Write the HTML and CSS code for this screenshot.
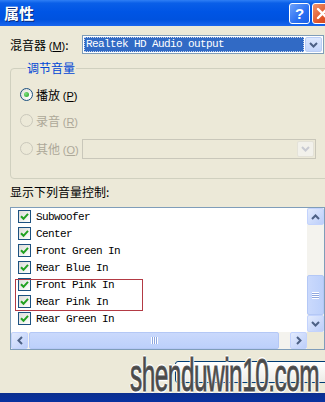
FILE: index.html
```html
<!DOCTYPE html>
<html>
<head>
<meta charset="utf-8">
<link rel="stylesheet" href="styles.css">
</head>
<body>
<div class="window">
  <div class="titlebar">
    <span class="title">属性</span>
    <div class="tb-buttons">
      <span class="tb-btn help">?</span>
      <span class="tb-btn close">
        <svg width="13" height="13" viewBox="0 0 13 13"><path d="M2 2 L11 11 M11 2 L2 11" stroke="#fff" stroke-width="2.4" stroke-linecap="round"/></svg>
      </span>
    </div>
  </div>
  <div class="client">
    <div class="mixer-row">
      <span class="label">混音器 <span class="acc">(<u>M</u>)</span>:</span>
      <div class="combo">
        <div class="combo-sel"><span>Realtek HD Audio output</span></div>
        <div class="combo-btn"><svg width="9" height="6" viewBox="0 0 9 6"><path d="M1 1 L4.5 4.5 L8 1" stroke="#4D6185" stroke-width="2" fill="none"/></svg></div>
      </div>
    </div>

    <fieldset class="group">
      <legend>调节音量</legend>
      <div class="radio-row r1">
        <span class="radio on"><span class="dot"></span></span>
        <span class="rlabel">播放 <span class="acc">(<u>P</u>)</span></span>
      </div>
      <div class="radio-row r2 disabled">
        <span class="radio"></span>
        <span class="rlabel">录音 <span class="acc">(<u>R</u>)</span></span>
      </div>
      <div class="radio-row r3 disabled">
        <span class="radio"></span>
        <span class="rlabel">其他 <span class="acc">(<u>O</u>)</span></span>
        <div class="combo dis">
          <div class="combo-sel"></div>
          <div class="combo-btn"><svg width="9" height="6" viewBox="0 0 9 6"><path d="M1 1 L4.5 4.5 L8 1" stroke="#C9CBD2" stroke-width="2" fill="none"/></svg></div>
        </div>
      </div>
    </fieldset>

    <div class="list-label">显示下列音量控制:</div>

    <div class="listbox">
      <div class="items">
        <div class="item"><span class="chk"><svg width="9" height="9" viewBox="0 0 9 9"><path d="M1 4.2 L3.5 6.8 L8 1.8" stroke="#21A121" stroke-width="2" fill="none"/></svg></span>Subwoofer</div>
        <div class="item"><span class="chk"><svg width="9" height="9" viewBox="0 0 9 9"><path d="M1 4.2 L3.5 6.8 L8 1.8" stroke="#21A121" stroke-width="2" fill="none"/></svg></span>Center</div>
        <div class="item"><span class="chk"><svg width="9" height="9" viewBox="0 0 9 9"><path d="M1 4.2 L3.5 6.8 L8 1.8" stroke="#21A121" stroke-width="2" fill="none"/></svg></span>Front Green In</div>
        <div class="item"><span class="chk"><svg width="9" height="9" viewBox="0 0 9 9"><path d="M1 4.2 L3.5 6.8 L8 1.8" stroke="#21A121" stroke-width="2" fill="none"/></svg></span>Rear Blue In</div>
        <div class="item"><span class="chk"><svg width="9" height="9" viewBox="0 0 9 9"><path d="M1 4.2 L3.5 6.8 L8 1.8" stroke="#21A121" stroke-width="2" fill="none"/></svg></span>Front Pink In</div>
        <div class="item"><span class="chk"><svg width="9" height="9" viewBox="0 0 9 9"><path d="M1 4.2 L3.5 6.8 L8 1.8" stroke="#21A121" stroke-width="2" fill="none"/></svg></span>Rear Pink In</div>
        <div class="item"><span class="chk"><svg width="9" height="9" viewBox="0 0 9 9"><path d="M1 4.2 L3.5 6.8 L8 1.8" stroke="#21A121" stroke-width="2" fill="none"/></svg></span>Rear Green In</div>
        <div class="highlight"></div>
      </div>
      <div class="vscroll">
        <div class="sbtn"><svg width="9" height="6" viewBox="0 0 9 6"><path d="M1 5 L4.5 1.5 L8 5" stroke="#4D6185" stroke-width="2" fill="none"/></svg></div>
        <div class="vtrack"><div class="vthumb"><span class="grip-h"></span></div></div>
        <div class="sbtn"><svg width="9" height="6" viewBox="0 0 9 6"><path d="M1 1 L4.5 4.5 L8 1" stroke="#4D6185" stroke-width="2" fill="none"/></svg></div>
      </div>
      <div class="hscroll">
        <div class="sbtn"><svg width="6" height="9" viewBox="0 0 6 9"><path d="M5 1 L1.5 4.5 L5 8" stroke="#4D6185" stroke-width="2" fill="none"/></svg></div>
        <div class="htrack"><div class="hthumb"><span class="grip-v"></span></div></div>
        <div class="sbtn"><svg width="6" height="9" viewBox="0 0 6 9"><path d="M1 1 L4.5 4.5 L1 8" stroke="#4D6185" stroke-width="2" fill="none"/></svg></div>
      </div>
      <div class="corner"></div>
    </div>

    <div class="button-row">
      <div class="okbtn"></div>
    </div>
  </div>
  <div class="bottom-bar"></div>
  <div class="watermark">shenduwin10.com</div>
</div>
</body>
</html>
```
FILE: styles.css
```css
* { box-sizing: border-box; }
html, body { margin: 0; padding: 0; }
body {
  width: 325px;
  height: 402px;
  overflow: hidden;
  background: #ECE9D8;
  font-family: "Noto Sans CJK SC", "Liberation Sans", sans-serif;
  font-size: 12px;
  color: #000;
}
.window {
  position: relative;
  width: 345px;
  height: 402px;
  display: flex;
  flex-direction: column;
  background: #ECE9D8;
  overflow: hidden;
}
.titlebar {
  height: 26px;
  flex: none;
  display: flex;
  align-items: center;
  justify-content: space-between;
  padding-left: 4px;
  background: linear-gradient(#2f7ff5 0%, #0a5fe8 12%, #0055e5 45%, #0052df 75%, #1a66ee 100%);
}
.title {
  color: #fff;
  font-weight: bold;
  font-size: 15px;
  text-shadow: 1px 1px 0 #0a2a7a;
  line-height: 16px;
}
.tb-buttons {
  display: flex;
  gap: 2px;
  padding-right: 12px;
  margin-top: 1px;
}
.tb-btn {
  width: 21px;
  height: 21px;
  border: 1px solid #fff;
  border-radius: 3px;
  display: flex;
  align-items: center;
  justify-content: center;
  color: #fff;
  font-family: "Liberation Sans", sans-serif;
  font-weight: bold;
  font-size: 15px;
}
.help { background: linear-gradient(135deg, #6ea2fb, #2a6ff2 60%, #1a5fe6); }
.close { background: linear-gradient(135deg, #f0956c, #e0542a 60%, #cc4418); }

.client {
  flex: 1;
  padding: 9px 0 0 10px;
  display: flex;
  flex-direction: column;
}
.acc {
  font-family: "Liberation Sans", sans-serif;
  font-size: 11px;
}
.mixer-row {
  display: flex;
  align-items: center;
  height: 19px;
}
.mixer-row .label { width: 72px; }
.combo {
  display: flex;
  width: 242px;
  height: 19px;
  border: 1px solid #7F9DB9;
  background: #fff;
  padding: 1px;
  gap: 1px;
}
.combo-sel {
  flex: 1;
  background: #316AC5;
  border: 1px dotted #c8d4ea;
  color: #fff;
  font-family: "Liberation Mono", monospace;
  font-size: 11px;
  letter-spacing: -0.6px;
  line-height: 13px;
  padding-left: 1px;
}
.combo-btn {
  width: 17px;
  flex: none;
  border-radius: 2px;
  border: 1px solid #B9CDF5;
  background: linear-gradient(#dde8fd, #c4d6fb);
  display: flex;
  align-items: center;
  justify-content: center;
}
.combo.dis {
  width: 234px;
  margin-left: 3px;
  height: 20px;
  border-color: #C9C7BA;
  background: #ECE9D8;
}
.combo.dis .combo-sel { background: transparent; border: none; }
.combo.dis .combo-btn { border-color: #E4E2D8; background: #F2F1EB; }

.group {
  margin: 6px 0 0 0;
  width: 330px;
  border: 1px solid #D0D0BF;
  border-radius: 4px;
  padding: 9px 0 20px 9px;
}
.group legend {
  color: #0046D5;
  padding: 0 1px;
  margin-left: 6px;
  line-height: 16px;
}
.radio-row {
  display: flex;
  align-items: center;
  height: 19px;
}
.r2 { margin-top: 7px; }
.r3 { margin-top: 9px; }
.radio {
  width: 13px;
  height: 13px;
  border-radius: 50%;
  border: 1px solid #1C5180;
  background: radial-gradient(circle at 70% 70%, #fff, #dcdcd5);
  display: flex;
  align-items: center;
  justify-content: center;
  margin-right: 3px;
}
.dot {
  width: 5px;
  height: 5px;
  border-radius: 50%;
  background: radial-gradient(circle at 35% 35%, #7fe07f, #21A121);
}
.disabled { color: #ACA899; }
.disabled .radio { border-color: #CAC8BB; background: #ECE9D8; }

.list-label { margin-top: 5px; line-height: 16px; }

.listbox {
  margin-top: 7px;
  width: 315px;
  height: 143px;
  border: 1px solid #7F9DB9;
  background: #fff;
  display: grid;
  grid-template-columns: 1fr 17px;
  grid-template-rows: 1fr 17px;
}
.items {
  position: relative;
  padding: 0 0 0 7px;
  font-family: "Liberation Mono", monospace;
  font-size: 11px;
  letter-spacing: -0.6px;
  overflow: hidden;
}
.item {
  height: 17px;
  display: flex;
  align-items: center;
}
.chk {
  width: 13px;
  height: 13px;
  border: 1px solid #1C5180;
  background: linear-gradient(135deg, #dcdcd7, #fff);
  display: flex;
  align-items: center;
  justify-content: center;
  margin-right: 5px;
  flex: none;
}
.highlight {
  position: absolute;
  left: 4px;
  top: 71px;
  width: 128px;
  height: 32px;
  border: 1px solid #B33A44;
}
.vscroll {
  display: flex;
  flex-direction: column;
  background: #F4F3EE;
}
.sbtn {
  width: 17px;
  height: 17px;
  flex: none;
  border: 1px solid #C3D3FD;
  border-radius: 2px;
  background: linear-gradient(135deg, #e3ebfd, #bccefa);
  display: flex;
  align-items: center;
  justify-content: center;
}
.vtrack {
  flex: 1;
  display: flex;
  flex-direction: column;
  justify-content: flex-end;
}
.vthumb {
  height: 40px;
  border: 1px solid #B4C8F6;
  border-radius: 2px;
  background: linear-gradient(90deg, #cad9fc, #bcd0fb);
  display: flex;
  align-items: center;
  justify-content: center;
}
.grip-h {
  width: 7px;
  height: 7px;
  background: repeating-linear-gradient(#fff 0 1px, #8fa7df 1px 2px);
}
.hscroll {
  display: flex;
  background: #F4F3EE;
}
.htrack {
  flex: 1;
  padding: 0 11px 0 1px;
}
.hthumb {
  height: 17px;
  border: 1px solid #B4C8F6;
  border-radius: 2px;
  background: linear-gradient(#cad9fc, #bcd0fb);
  display: flex;
  align-items: center;
  justify-content: center;
}
.grip-v {
  width: 7px;
  height: 7px;
  background: repeating-linear-gradient(90deg, #fff 0 1px, #8fa7df 1px 2px);
}
.corner { background: #ECE9D8; }

.button-row {
  margin-top: 11px;
  padding-left: 165px;
}
.okbtn {
  width: 160px;
  height: 22px;
  border: 1px solid #003C74;
  border-radius: 3px;
  background: linear-gradient(#fff, #ecebe6);
}
.bottom-bar {
  height: 9px;
  flex: none;
  background: linear-gradient(#0b2f8f, #0831a0);
}
.watermark {
  position: absolute;
  left: 130px;
  top: 351px;
  font-family: "Liberation Sans", sans-serif;
  font-size: 47px;
  line-height: 47px;
  color: #4a4a4a;
  letter-spacing: -1px;
  transform-origin: left top;
  transform: scaleX(0.52);
  -webkit-text-stroke: 1px #555;
  text-shadow: 2px 0 0 #fff, -2px 0 0 #fff, 0 2px 0 #fff, 0 -2px 0 #fff;
  white-space: nowrap;
}
```
